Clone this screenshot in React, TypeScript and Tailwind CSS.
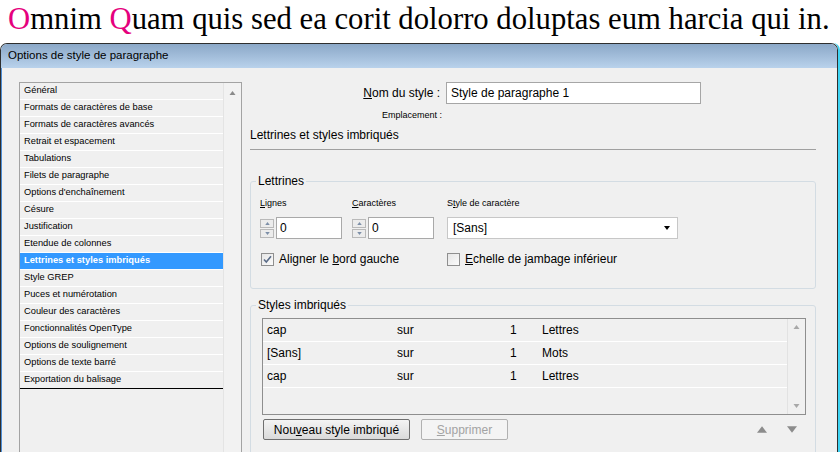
import type { ReactNode } from 'react'

const SECTIONS = [
  'Général',
  'Formats de caractères de base',
  'Formats de caractères avancés',
  'Retrait et espacement',
  'Tabulations',
  'Filets de paragraphe',
  "Options d'enchaînement",
  'Césure',
  'Justification',
  'Etendue de colonnes',
  'Lettrines et styles imbriqués',
  'Style GREP',
  'Puces et numérotation',
  'Couleur des caractères',
  'Fonctionnalités OpenType',
  'Options de soulignement',
  'Options de texte barré',
  'Exportation du balisage',
]

const NESTED = [
  { style: 'cap', mode: 'sur', count: 1, unit: 'Lettres' },
  { style: '[Sans]', mode: 'sur', count: 1, unit: 'Mots' },
  { style: 'cap', mode: 'sur', count: 1, unit: 'Lettres' },
]

function Tri({ down = false, className = '' }: { down?: boolean; className?: string }) {
  return (
    <svg width="9" height="6" viewBox="0 0 9 6" className={className}>
      <path d={down ? 'M0 0h9L4.5 6z' : 'M4.5 0L9 6H0z'} fill="currentColor" />
    </svg>
  )
}

function Spinner({ value }: { value: string }) {
  return (
    <div className="flex h-[22px] w-[82px]">
      <div className="flex w-[16px] flex-col justify-center gap-[1px] pr-[2px]">
        <div className="flex h-[9px] items-center justify-center border border-[#b9b9b9] bg-[#ececec] text-[#7d8fa8]">
          <Tri className="h-[3px] w-[5px]" />
        </div>
        <div className="flex h-[9px] items-center justify-center border border-[#b9b9b9] bg-[#ececec] text-[#7d8fa8]">
          <Tri down className="h-[3px] w-[5px]" />
        </div>
      </div>
      <div className="flex flex-1 items-center border border-[#a9a9a9] bg-white pl-[3px] text-[12px]">{value}</div>
    </div>
  )
}

function Check({ checked, children }: { checked?: boolean; children: ReactNode }) {
  return (
    <div className="flex items-center gap-[5px]">
      <div className="flex h-[13px] w-[13px] items-center justify-center border border-[#8f8f8f] bg-linear-to-br from-[#e6e6e6] to-[#fbfbfb]">
        {checked && (
          <svg width="9" height="9" viewBox="0 0 9 9">
            <path d="M1 4.5l2.3 2.5L8 1.3" stroke="#5a6c88" strokeWidth="1.6" fill="none" />
          </svg>
        )}
      </div>
      <span>{children}</span>
    </div>
  )
}

export default function App() {
  return (
    <div className="h-[452px] w-[840px] overflow-hidden bg-white font-['Liberation_Sans',Arial,sans-serif] text-black">
      <div className="h-[43px] pl-[8px] pt-[2px] font-['Liberation_Serif',serif] text-[30.7px] leading-[34px] whitespace-nowrap">
        <span className="text-[#e5007d]">O</span>mnim <span className="text-[#e5007d]">Q</span>uam quis sed ea corit dolorro
        doluptas eum harcia qui in.
      </div>

      <div className="h-[409px] rounded-t-[7px] border-r-2 border-r-[#3fd3f2]">
        <div className="flex h-full flex-col overflow-hidden rounded-t-[7px] border-t border-r border-l border-[#2e2e2e]">
          <div className="flex h-[24px] shrink-0 items-center bg-linear-to-b from-[#8ba8c8] to-[#b9d2ec] pl-[7px] text-[11.5px]">
            Options de style de paragraphe
          </div>

          <div className="flex min-h-0 flex-1 border-l border-l-[#4f8fd6] bg-[#f0f0f0]">
            {/* section list */}
            <div className="w-[248px] shrink-0 pt-[14px] pl-[17px]">
              <div className="flex h-[400px] w-[223px] border border-[#a3a3a3]">
                <div className="w-[203px]">
                  {SECTIONS.map((s, i) => (
                    <div
                      key={s}
                      className={
                        i === 10
                          ? 'flex h-[17px] items-center border-b border-white bg-[#3399ff] pl-[4px] text-[9.3px] font-bold text-white'
                          : i === SECTIONS.length - 1
                            ? 'flex h-[17px] items-center border-b border-black pl-[4px] text-[9.3px]'
                            : 'flex h-[17px] items-center border-b border-white pl-[4px] text-[9.3px]'
                      }
                    >
                      {s}
                    </div>
                  ))}
                </div>
                <div className="flex w-[18px] justify-center border-l border-[#e4e4e4] bg-[#f2f2f2] pt-[8px] text-[#8a8a8a]">
                  <Tri className="h-[4px] w-[7px]" />
                </div>
              </div>
            </div>

            {/* options panel */}
            <div className="flex-1 pr-[21px] text-[12px]">
              <div className="mt-[14px] flex h-[22px] items-center">
                <div className="w-[196px] pr-[6px] text-right">
                  <span className="underline">N</span>om du style :
                </div>
                <div className="flex h-[22px] w-[255px] items-center border border-[#a6a6a6] bg-white pl-[4px]">
                  Style de paragraphe 1
                </div>
              </div>
              <div className="mt-[5px] h-[12px] w-[192px] text-right text-[9px] leading-[12px]">Emplacement :</div>
              <div className="mt-[7px] h-[15px] leading-[15px]">Lettrines et styles imbriqués</div>
              <div className="mt-[6px] h-px bg-[#a0a0a0]" />

              <fieldset className="mt-[24px] rounded-[3px] border border-[#d3dce3] pb-[21px] pl-[9px]">
                <legend className="-ml-[4px] px-[2px] leading-[14px]">Lettrines</legend>
                <div className="mt-[9px] flex h-[12px] text-[9px] leading-[12px]">
                  <div className="w-[92px]">
                    <span className="underline">L</span>ignes
                  </div>
                  <div className="w-[95px]">
                    <span className="underline">C</span>aractères
                  </div>
                  <div>
                    S<span className="underline">t</span>yle de caractère
                  </div>
                </div>
                <div className="mt-[8px] flex h-[22px]">
                  <div className="w-[92px]">
                    <Spinner value="0" />
                  </div>
                  <div className="w-[95px]">
                    <Spinner value="0" />
                  </div>
                  <div className="flex h-[22px] w-[231px] items-center justify-between border border-[#c7c7c7] bg-white pr-[6px] pl-[5px]">
                    <span>[Sans]</span>
                    <Tri down className="h-[4px] w-[8px]" />
                  </div>
                </div>
                <div className="mt-[12px] flex h-[16px] items-center">
                  <div className="w-[187px] pl-[1px]">
                    <Check checked>
                      Aligner le <span className="underline">b</span>ord gauche
                    </Check>
                  </div>
                  <Check>
                    <span className="underline">E</span>chelle de jambage inférieur
                  </Check>
                </div>
              </fieldset>

              <fieldset className="mt-[9px] h-[200px] rounded-[3px] border border-[#d3dce3] pl-[11px]">
                <legend className="-ml-[6px] px-[2px] leading-[14px]">Styles imbriqués</legend>
                <div className="mt-[6px] flex h-[97px] w-[544px] border border-[#8e8e8e] bg-[#f0f0f0]">
                  <div className="flex-1">
                    {NESTED.map((n, i) => (
                      <div key={i} className="flex h-[23px] items-center border-b border-white pl-[4px]">
                        <span className="w-[130px]">{n.style}</span>
                        <span className="w-[113px]">{n.mode}</span>
                        <span className="w-[32px]">{n.count}</span>
                        <span>{n.unit}</span>
                      </div>
                    ))}
                  </div>
                  <div className="flex w-[18px] flex-col items-center justify-between border-l border-[#e2e2e2] py-[6px] text-[#a8a8a8]">
                    <Tri className="h-[4px] w-[7px]" />
                    <Tri down className="h-[4px] w-[7px]" />
                  </div>
                </div>
                <div className="mt-[4px] flex h-[21px] w-[544px] items-center">
                  <div className="ml-[1px] flex h-[21px] w-[147px] items-center justify-center rounded-[2px] border border-[#6f6f6f] bg-linear-to-b from-[#f4f4f4] to-[#dadada]">
                    Nou<span className="underline">v</span>eau style imbriqué
                  </div>
                  <div className="ml-[11px] flex h-[21px] w-[87px] items-center justify-center rounded-[2px] border border-[#b1b1b1] bg-[#f4f4f4] text-[#a3a3a3]">
                    <span className="underline">S</span>upprimer
                  </div>
                  <div className="ml-auto flex gap-[20px] pr-[9px] text-[#8c8c8c]">
                    <Tri className="h-[9px] w-[10px]" />
                    <Tri down className="h-[9px] w-[10px]" />
                  </div>
                </div>
              </fieldset>
            </div>
          </div>
        </div>
      </div>
    </div>
  )
}
